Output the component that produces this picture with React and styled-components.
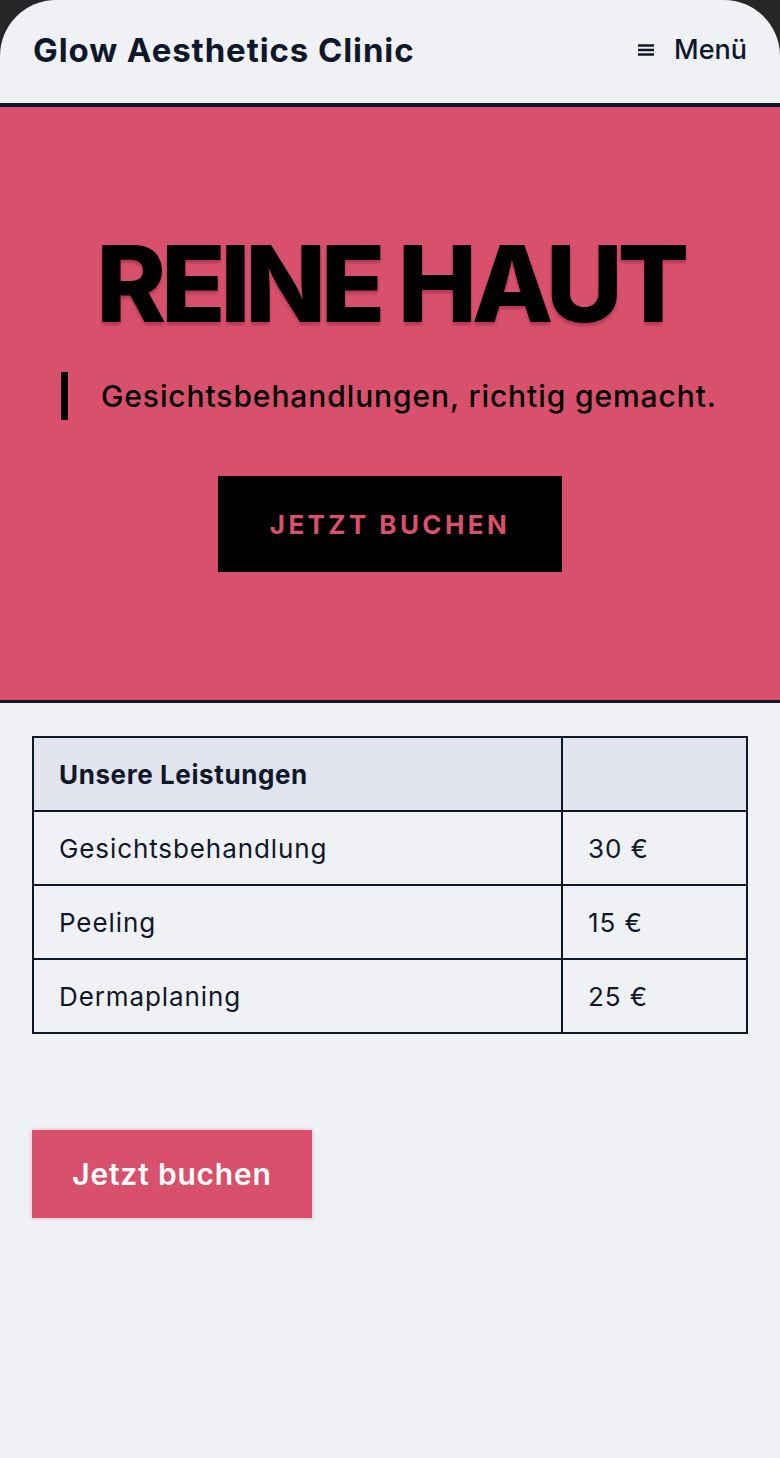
import React from 'react'
import styled, { createGlobalStyle } from 'styled-components'

const GlobalStyle = createGlobalStyle`
  html, body {
    margin: 0;
    padding: 0;
    background: #262626;
  }
  body {
    font-family: Inter, "Noto Sans", sans-serif;
    color: #0f172a;
  }
`;

const Screen = styled.div`
  min-height: 1458px;
  background: #eff1f5;
  border-radius: 56px 56px 0 0;
  overflow: hidden;
`;

const Header = styled.header`
  height: 103px;
  display: flex;
  align-items: center;
  justify-content: space-between;
  padding: 0 33px;
  border-bottom: 4px solid #0f172a;
  box-sizing: content-box;
`;

const Brand = styled.div`
  font-size: 33px;
  font-weight: 700;
  letter-spacing: 0.9px;
  color: #0f172a;
  margin-top: -4px;
`;

const MenuButton = styled.button`
  display: flex;
  align-items: center;
  gap: 20px;
  border: none;
  background: none;
  padding: 0;
  font-family: inherit;
  font-size: 27px;
  font-weight: 500;
  color: #0f172a;
  margin-top: -4px;
`;

const Hero = styled.section`
  height: 596px;
  box-sizing: border-box;
  background: #d9506c;
  border-bottom: 3px solid #0f172a;
  display: flex;
  flex-direction: column;
  align-items: center;
  padding-top: 124px;
`;

const HeroTitle = styled.h1`
  margin: 0;
  font-size: 106px;
  line-height: 1;
  font-weight: 800;
  letter-spacing: -5.4px;
  color: #000;
  text-shadow: 0 3px 3px rgba(90, 0, 25, 0.3);
`;

const Tagline = styled.p`
  align-self: flex-start;
  margin: 35px 0 0 61px;
  padding-left: 33px;
  border-left: 7px solid #000;
  font-size: 30px;
  line-height: 48px;
  font-weight: 500;
  letter-spacing: 0.9px;
  color: #000;
`;

const HeroButton = styled.button`
  margin-top: 56px;
  width: 344px;
  height: 96px;
  border: none;
  background: #000;
  color: #d9506c;
  font-family: inherit;
  font-size: 26px;
  font-weight: 700;
  letter-spacing: 3.4px;
`;

const Content = styled.main`
  padding: 33px 32px 0;
`;

const Table = styled.table`
  width: 716px;
  border-collapse: collapse;
  font-size: 26px;
  letter-spacing: 0.9px;
  color: #0f172a;
`;

const Cell = styled.td`
  height: 74px;
  box-sizing: border-box;
  border: 2px solid #0f172a;
  padding: 0 25px;
  width: ${p => (p.$price ? '185px' : 'auto')};
  background: ${p => (p.$head ? '#e2e5ee' : 'transparent')};
  font-weight: ${p => (p.$head ? 700 : 400)};
  letter-spacing: ${p => (p.$head ? '0.6px' : '0.9px')};
`;

const BookButton = styled.button`
  margin-top: 96px;
  width: 280px;
  height: 88px;
  border: none;
  background: #d9506c;
  color: #fff;
  font-family: inherit;
  font-size: 30px;
  font-weight: 600;
  letter-spacing: 0.8px;
  box-shadow: 0 0 4px rgba(217, 80, 108, 0.4);
`;

const MenuIcon = () => (
  <svg width="16" height="14" viewBox="0 0 16 14" fill="none">
    <path d="M0 2.5h16M0 7h16M0 11.5h16" stroke="#0f172a" strokeWidth="2.4" />
  </svg>
);

const services = [
  ['Gesichtsbehandlung', '30 €'],
  ['Peeling', '15 €'],
  ['Dermaplaning', '25 €'],
];

const App = () => {
  return (
    <Screen>
      <GlobalStyle />
      <Header>
        <Brand>Glow Aesthetics Clinic</Brand>
        <MenuButton>
          <MenuIcon />
          Menü
        </MenuButton>
      </Header>
      <Hero>
        <HeroTitle>REINE HAUT</HeroTitle>
        <Tagline>Gesichtsbehandlungen, richtig gemacht.</Tagline>
        <HeroButton>JETZT BUCHEN</HeroButton>
      </Hero>
      <Content>
        <Table>
          <tbody>
            <tr>
              <Cell $head>Unsere Leistungen</Cell>
              <Cell $head $price></Cell>
            </tr>
            {services.map(([name, price]) => (
              <tr key={name}>
                <Cell>{name}</Cell>
                <Cell $price>{price}</Cell>
              </tr>
            ))}
          </tbody>
        </Table>
        <BookButton>Jetzt buchen</BookButton>
      </Content>
    </Screen>
  )
}

export default App
